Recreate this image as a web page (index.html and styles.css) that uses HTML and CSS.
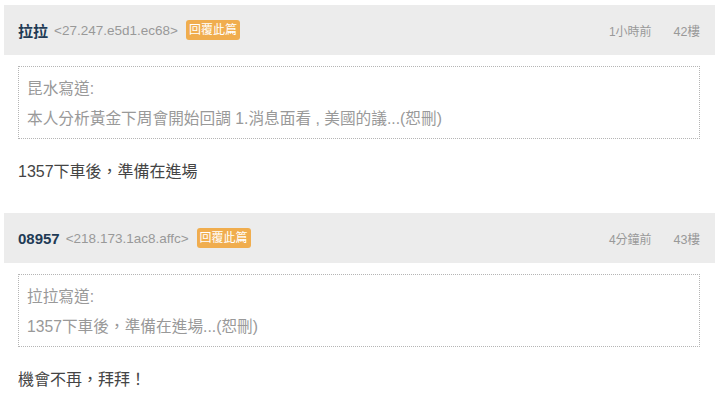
FILE: index.html
```html
<!DOCTYPE html>
<html lang="zh-Hant">
<head>
<meta charset="utf-8">
<link rel="stylesheet" href="styles.css">
</head>
<body>
<div class="thread">
  <div class="post">
    <div class="post-head">
      <div class="author">
        <span class="name">拉拉</span>
        <span class="ip">&lt;27.247.e5d1.ec68&gt;</span>
        <span class="reply">回覆此篇</span>
      </div>
      <div class="meta">
        <span class="time">1小時前</span>
        <span class="floor">42樓</span>
      </div>
    </div>
    <div class="quote">
      <div class="quote-line">昆水寫道:</div>
      <div class="quote-line">本人分析黃金下周會開始回調 1.消息面看 , 美國的議...(恕刪)</div>
    </div>
    <div class="content">1357下車後，準備在進場</div>
  </div>
  <div class="post">
    <div class="post-head">
      <div class="author">
        <span class="name">08957</span>
        <span class="ip">&lt;218.173.1ac8.affc&gt;</span>
        <span class="reply">回覆此篇</span>
      </div>
      <div class="meta">
        <span class="time">4分鐘前</span>
        <span class="floor">43樓</span>
      </div>
    </div>
    <div class="quote">
      <div class="quote-line">拉拉寫道:</div>
      <div class="quote-line">1357下車後，準備在進場...(恕刪)</div>
    </div>
    <div class="content">機會不再，拜拜！</div>
  </div>
</div>
</body>
</html>
```
FILE: styles.css
```css
html, body {
  margin: 0;
  padding: 0;
  background: #fff;
}
body {
  font-family: "Liberation Sans", "Noto Sans CJK TC", sans-serif;
  color: #333;
}
.thread {
  padding: 5px 5px 0 4px;
}
.post + .post {
  margin-top: 28px;
}
.post-head {
  height: 50px;
  background: #ececec;
  display: flex;
  align-items: center;
  justify-content: space-between;
  padding: 0 15px 0 14px;
}
.author {
  display: flex;
  align-items: center;
}
.name {
  font-size: 15px;
  font-weight: bold;
  color: #213a55;
}
.ip {
  font-size: 13.5px;
  color: #999;
  margin-left: 6px;
}
.reply {
  margin-left: 8px;
  background: #f0ad4e;
  color: #fff;
  font-size: 12px;
  line-height: 20px;
  height: 20px;
  padding: 0 3px;
  border-radius: 3px;
}
.meta {
  display: flex;
  align-items: center;
  font-size: 12px;
  color: #999;
}
.floor {
  margin-left: 22px;
  font-size: 12.5px;
}
.quote {
  margin: 11px 15px 0 14px;
  border: 1px dotted #b5b5b5;
  padding: 7px 8px 4px;
  color: #999;
  font-size: 15.7px;
}
.quote-line {
  line-height: 30px;
}
.content {
  margin: 20px 0 0 14px;
  line-height: 26px;
  font-size: 16px;
  color: #444;
}
```
